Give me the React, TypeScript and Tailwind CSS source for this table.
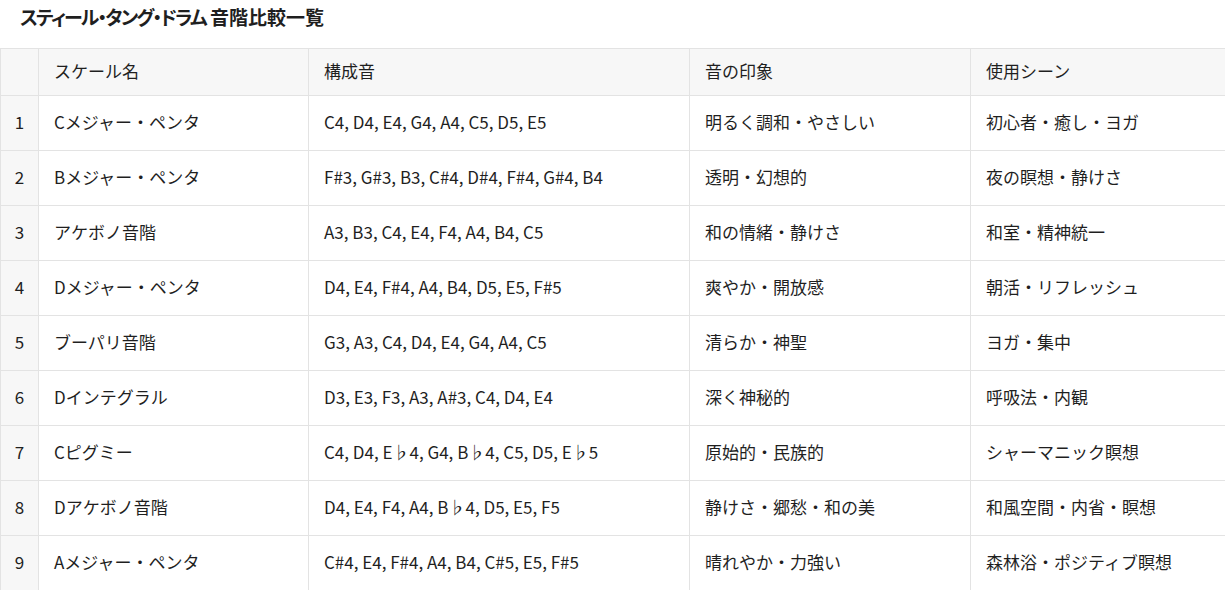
import React from 'react';

type Row = {
  name: string;
  notes: string;
  impression: string;
  scene: string;
};

const rows: Row[] = [
  { name: 'Cメジャー・ペンタ', notes: 'C4, D4, E4, G4, A4, C5, D5, E5', impression: '明るく調和・やさしい', scene: '初心者・癒し・ヨガ' },
  { name: 'Bメジャー・ペンタ', notes: 'F#3, G#3, B3, C#4, D#4, F#4, G#4, B4', impression: '透明・幻想的', scene: '夜の瞑想・静けさ' },
  { name: 'アケボノ音階', notes: 'A3, B3, C4, E4, F4, A4, B4, C5', impression: '和の情緒・静けさ', scene: '和室・精神統一' },
  { name: 'Dメジャー・ペンタ', notes: 'D4, E4, F#4, A4, B4, D5, E5, F#5', impression: '爽やか・開放感', scene: '朝活・リフレッシュ' },
  { name: 'ブーパリ音階', notes: 'G3, A3, C4, D4, E4, G4, A4, C5', impression: '清らか・神聖', scene: 'ヨガ・集中' },
  { name: 'Dインテグラル', notes: 'D3, E3, F3, A3, A#3, C4, D4, E4', impression: '深く神秘的', scene: '呼吸法・内観' },
  { name: 'Cピグミー', notes: 'C4, D4, E♭4, G4, B♭4, C5, D5, E♭5', impression: '原始的・民族的', scene: 'シャーマニック瞑想' },
  { name: 'Dアケボノ音階', notes: 'D4, E4, F4, A4, B♭4, D5, E5, F5', impression: '静けさ・郷愁・和の美', scene: '和風空間・内省・瞑想' },
  { name: 'Aメジャー・ペンタ', notes: 'C#4, E4, F#4, A4, B4, C#5, E5, F#5', impression: '晴れやか・力強い', scene: '森林浴・ポジティブ瞑想' },
];

const font = "font-['Meiryo','Noto_Sans_CJK_JP','Noto_Sans',sans-serif]";
const cell = 'border border-[#e3e3e3] pl-[15px] pb-[3px] text-left';

export default function App() {
  return (
    <div className={`w-[1225px] h-[590px] overflow-hidden bg-white text-[#1f1f1f] ${font}`}>
      {/* Title */}
      <h1 className="h-[48px] pl-[20px] pt-[3px] text-[19px] font-bold leading-[28px] [font-feature-settings:'palt']">
        <span className="tracking-[-1.8px]">スティール・タング・ドラム</span> 音階比較一覧
      </h1>

      {/* Scale table */}
      <table className="w-[1226px] border-collapse table-fixed text-[17px]">
        <colgroup>
          <col className="w-[38px]" />
          <col className="w-[270px]" />
          <col className="w-[381px]" />
          <col className="w-[281px]" />
          <col className="w-[256px]" />
        </colgroup>
        <thead>
          <tr className="h-[47px] bg-[#f7f7f7]">
            <th className="border border-[#e3e3e3]" />
            <th className={`${cell} font-normal`}>スケール名</th>
            <th className={`${cell} font-normal`}>構成音</th>
            <th className={`${cell} font-normal`}>音の印象</th>
            <th className={`${cell} font-normal`}>使用シーン</th>
          </tr>
        </thead>
        <tbody>
          {rows.map((row, i) => (
            <tr key={i} className="h-[55px]">
              <td className="border border-[#e3e3e3] bg-[#f7f7f7] pb-[3px] text-center">{i + 1}</td>
              <td className={cell}>{row.name}</td>
              <td className={cell}>{row.notes}</td>
              <td className={cell}>{row.impression}</td>
              <td className={cell}>{row.scene}</td>
            </tr>
          ))}
        </tbody>
      </table>
    </div>
  );
}
